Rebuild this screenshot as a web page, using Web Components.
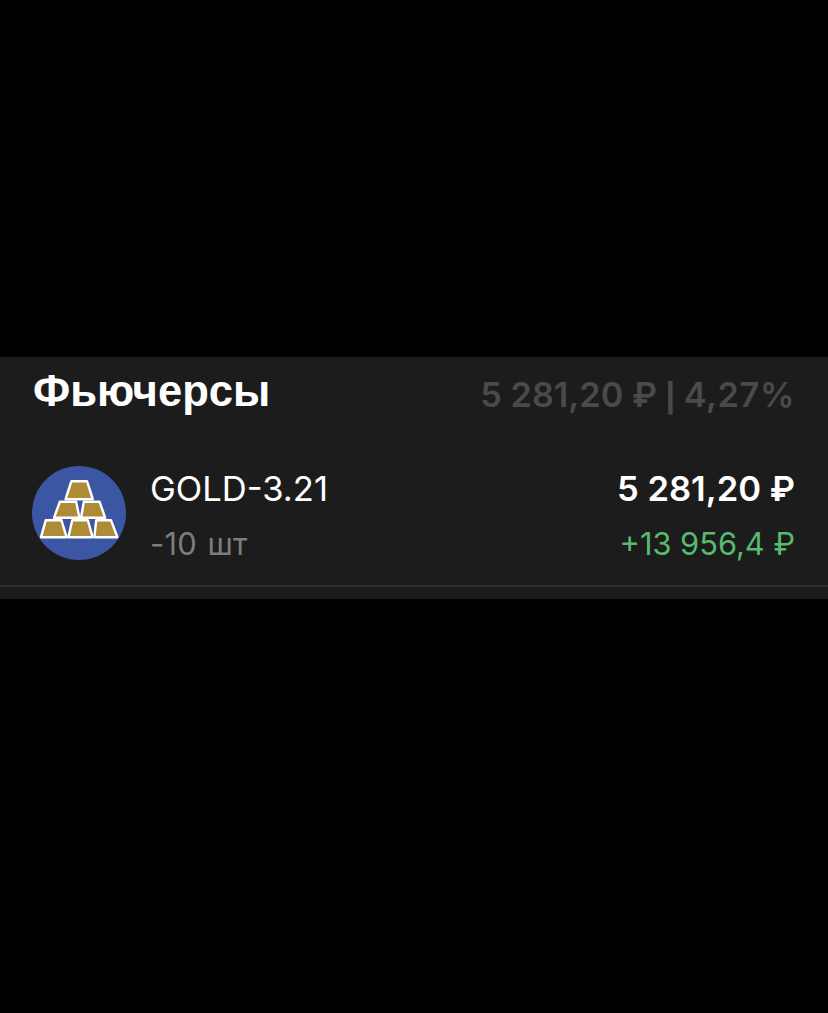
<!DOCTYPE html>
<html lang="ru">
<head>
<meta charset="utf-8">
<title>Фьючерсы</title>
<style>
  html, body { margin: 0; background: #000; }
  body { height: 1013px; overflow: hidden; padding-top: 357px; box-sizing: border-box; font-family: Inter, "Liberation Sans", sans-serif; }
  .pipe { font-family: "Liberation Sans", Arial, sans-serif; font-weight: 700; }
  .pct { letter-spacing: .6px; }
</style>
</head>
<body>
<portfolio-section>
  <span slot="title">Фьючерсы</span>
  <span slot="summary">5 281,20 ₽ <span class="pipe">|</span> <span class="pct">4,27%</span></span>
  <position-row name="GOLD-3.21" qty="-10 шт" price="5 281,20 ₽" change="+13 956,4 ₽"></position-row>
</portfolio-section>

<script>
class PortfolioSection extends HTMLElement {
  constructor() {
    super();
    this.attachShadow({ mode: 'open' });
  }

  connectedCallback() {
    this.shadowRoot.innerHTML = `
      <style>
        :host { display: block; height: 242px; background: #1c1c1c; }
        .head { display: flex; justify-content: space-between; align-items: flex-start; height: 97px; padding: 9px 33px 0 33px; box-sizing: border-box; }
        .title { font-family: "Liberation Sans", Arial, sans-serif; font-size: 43.6px; font-weight: 700; line-height: 50px; color: #fff; }
        .summary { font-size: 34.3px; font-weight: 600; line-height: 50px; margin-top: 4px; color: #4a4a4a; }
      </style>
      <div class="head">
        <div class="title"><slot name="title"></slot></div>
        <div class="summary"><slot name="summary"></slot></div>
      </div>
      <slot></slot>
    `;
  }
}

class AssetIcon extends HTMLElement {
  constructor() {
    super();
    this.attachShadow({ mode: 'open' });
  }

  connectedCallback() {
    const bars = [
      '39.4,15.2 55,15.2 60.8,33.2 33.6,33.2',
      '27.8,35.8 44.2,35.8 47.4,51.8 22,51.8',
      '51.8,35.8 67.6,35.8 73.2,51.8 49,51.8',
      '13.8,54.2 29.4,54.2 34.6,71.2 9,71.2',
      '40.2,54.2 55.8,54.2 60.6,71.2 36.4,71.2',
      '64.2,54.2 79,54.2 85.4,71.2 62.4,71.2',
    ];
    this.shadowRoot.innerHTML = `
      <style>
        :host { display: block; width: 94px; height: 94px; flex-shrink: 0; margin-bottom: 13px; }
        svg { display: block; }
      </style>
      <svg width="94" height="94" viewBox="0 0 94 94">
        <circle cx="47" cy="47" r="47" fill="#3b57a3"/>
        ${bars.map((p) => `<polygon points="${p}" fill="#ae8c35" stroke="#fff" stroke-width="2.4" stroke-linejoin="round"/>`).join('')}
      </svg>
    `;
  }
}

class PositionRow extends HTMLElement {
  constructor() {
    super();
    this.attachShadow({ mode: 'open' });
  }

  connectedCallback() {
    this.shadowRoot.innerHTML = `
      <style>
        :host { display: block; }
        .row { display: flex; align-items: center; height: 133px; padding: 0 33px 0 32px; box-sizing: border-box; border-bottom: 2px solid #2e2e2e; }
        .left { margin-left: 24px; flex: 1; }
        .right { text-align: right; }
        .line1, .line2 { height: 55px; line-height: 55px; white-space: nowrap; }
        .line1 { font-size: 34.6px; color: #fff; }
        .line2 { font-size: 30.8px; }
        .name { font-weight: 400; }
        .price { font-weight: 600; }
        .qty { color: #7d7d7d; letter-spacing: .3px; word-spacing: 1.5px; }
        .change { color: #55bb6e; }
        .text { padding-bottom: 7px; }
      </style>
      <div class="row">
        <asset-icon></asset-icon>
        <div class="left text">
          <div class="line1 name">${this.getAttribute('name')}</div>
          <div class="line2 qty">${this.getAttribute('qty')}</div>
        </div>
        <div class="right text">
          <div class="line1 price">${this.getAttribute('price')}</div>
          <div class="line2 change">${this.getAttribute('change')}</div>
        </div>
      </div>
    `;
  }
}

customElements.define('portfolio-section', PortfolioSection);
customElements.define('asset-icon', AssetIcon);
customElements.define('position-row', PositionRow);
</script>
</body>
</html>
